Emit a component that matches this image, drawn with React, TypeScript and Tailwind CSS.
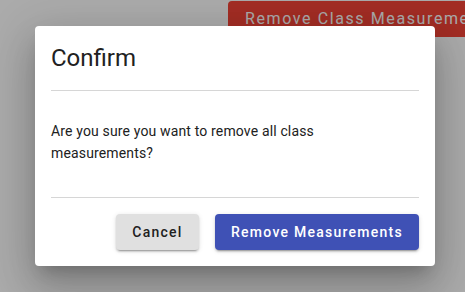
import React from 'react';

export default function App() {
  return (
    <div className="relative h-[292px] w-[465px] overflow-hidden bg-white font-['Roboto',sans-serif]">
      <div className="flex pl-[228px] pt-px">
        <button className="h-9 shrink-0 whitespace-nowrap rounded bg-[#f44336] pl-[17px] pr-4 text-[16px] font-normal tracking-[1.6px] text-white">
          Remove Class Measurements
        </button>
      </div>

      <div className="absolute inset-0 bg-black/[0.33]">
        <div className="absolute left-[35px] top-[26px] w-[400px] rounded bg-white shadow-[0_11px_15px_-7px_rgba(0,0,0,0.2),0_24px_38px_3px_rgba(0,0,0,0.14),0_9px_46px_8px_rgba(0,0,0,0.12)]">
          <div className="mx-4 pt-4">
            <h2 className="h-8 text-[24px] leading-8 font-normal text-[#212121]">Confirm</h2>
            <div className="mt-4 border-t border-[#d6d6d6]" />
            <p className="pt-[29px] pb-[33px] text-[14px] leading-[22px] tracking-[0.15px] text-[#212121]">
              Are you sure you want to remove all class measurements?
            </p>
            <div className="border-t border-[#d6d6d6]" />
          </div>
          <div className="flex justify-end gap-4 px-4 pt-4 pb-4">
            <button className="h-9 w-[83px] rounded bg-[#e0e0e0] text-[14px] font-medium tracking-[1.25px] text-[#212121] shadow-[0_3px_1px_-2px_rgba(0,0,0,0.2),0_2px_2px_0_rgba(0,0,0,0.14),0_1px_5px_0_rgba(0,0,0,0.12)]">
              Cancel
            </button>
            <button className="h-9 w-[204px] rounded bg-[#3f51b5] text-[14px] font-medium tracking-[1.25px] text-white shadow-[0_3px_1px_-2px_rgba(0,0,0,0.2),0_2px_2px_0_rgba(0,0,0,0.14),0_1px_5px_0_rgba(0,0,0,0.12)]">
              Remove Measurements
            </button>
          </div>
        </div>
      </div>
    </div>
  );
}
